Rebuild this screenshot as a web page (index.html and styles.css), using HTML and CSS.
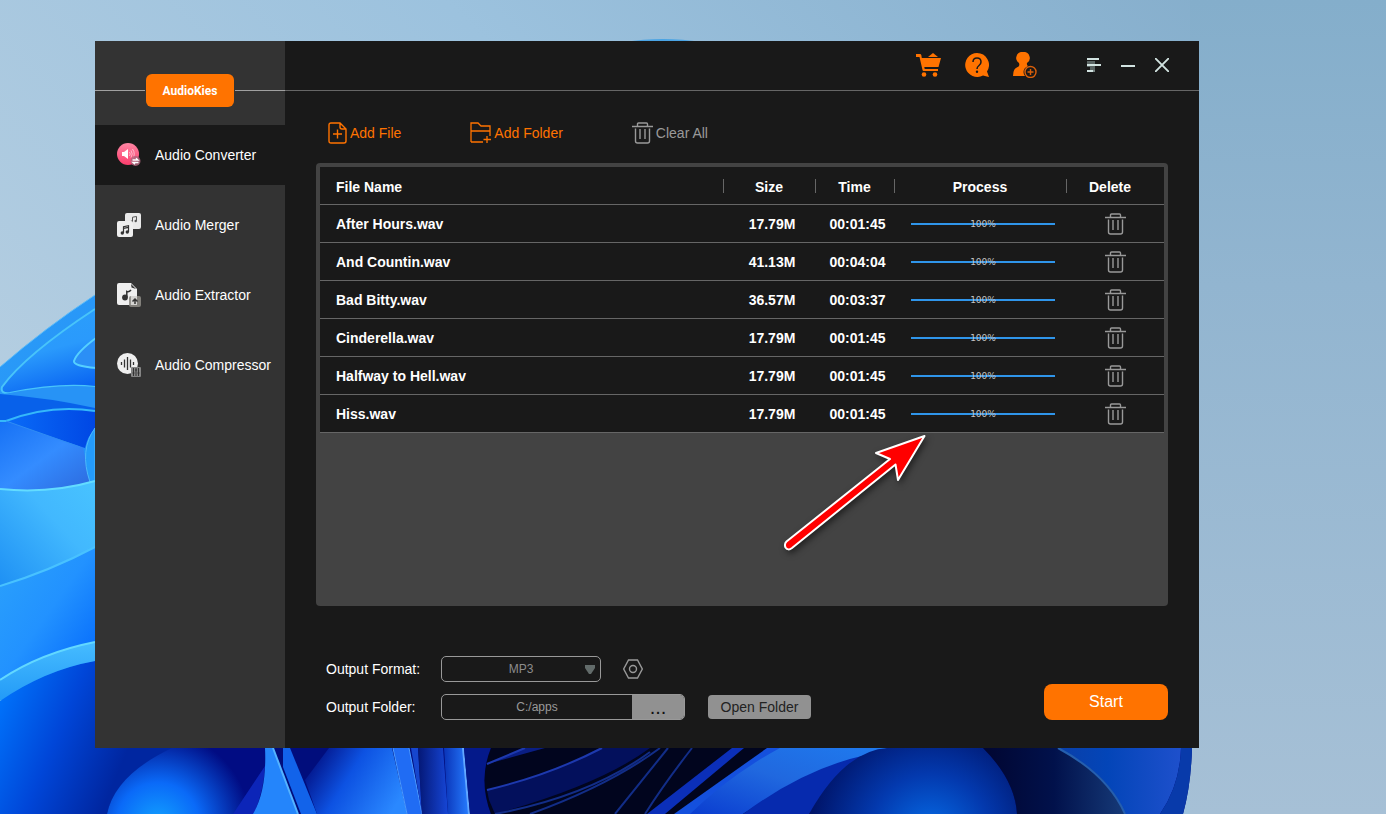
FILE: index.html
```html
<!DOCTYPE html>
<html lang="en">
<head>
    <meta charset="UTF-8">
    <meta name="viewport" content="width=device-width, initial-scale=1.0">
    <title>AudioKies</title>
    <link rel="stylesheet" href="styles.css">
</head>
<body>
    <!-- desktop wallpaper -->
    <svg class="wallpaper" viewBox="0 0 1386 814" preserveAspectRatio="none" aria-hidden="true">
        <defs>
            <linearGradient id="sky" x1="0" y1="0.6" x2="1" y2="0"><stop offset="0" stop-color="#b7cfe1"/><stop offset="0.5" stop-color="#9cc2de"/><stop offset="1" stop-color="#81aac8"/></linearGradient>
            <linearGradient id="skyRight" x1="0" y1="0" x2="0" y2="1"><stop offset="0" stop-color="#84aecb"/><stop offset="0.35" stop-color="#92b5d0"/><stop offset="1" stop-color="#a6c0d6"/></linearGradient>
            <linearGradient id="leaf" x1="0" y1="0" x2="0.3" y2="1"><stop offset="0" stop-color="#2c9df6"/><stop offset="0.6" stop-color="#2390fb"/><stop offset="1" stop-color="#0564f2"/></linearGradient>
            <linearGradient id="leafInner" x1="0.3" y1="0" x2="0.6" y2="1"><stop offset="0" stop-color="#2b9ffa"/><stop offset="0.5" stop-color="#2a9afc"/><stop offset="1" stop-color="#0a66f2"/></linearGradient>
            <linearGradient id="mid" x1="0" y1="0" x2="1" y2="1"><stop offset="0" stop-color="#1671f5"/><stop offset="0.5" stop-color="#348cff"/><stop offset="1" stop-color="#2c68dc"/></linearGradient>
            <linearGradient id="dark" x1="0" y1="0" x2="1" y2="0"><stop offset="0" stop-color="#0a6cf8"/><stop offset="1" stop-color="#0047e4"/></linearGradient>
            <linearGradient id="cyan" x1="0" y1="1" x2="1" y2="0"><stop offset="0" stop-color="#1e90f4"/><stop offset="0.6" stop-color="#42b8fe"/><stop offset="1" stop-color="#48c3ff"/></linearGradient>
            <linearGradient id="blue" x1="0" y1="0" x2="1" y2="1"><stop offset="0" stop-color="#2ba2fb"/><stop offset="0.5" stop-color="#2292ff"/><stop offset="1" stop-color="#0266fb"/></linearGradient>
            <linearGradient id="deep" gradientUnits="userSpaceOnUse" x1="0" y1="690" x2="130" y2="745"><stop offset="0" stop-color="#0074fc"/><stop offset="0.5" stop-color="#0046d8"/><stop offset="1" stop-color="#0026a0"/></linearGradient>
            <linearGradient id="band" x1="0" y1="0" x2="0" y2="1"><stop offset="0" stop-color="#46bcff"/><stop offset="1" stop-color="#239af7"/></linearGradient>
            <radialGradient id="glowLeft" gradientUnits="userSpaceOnUse" cx="158" cy="824" r="92"><stop offset="0" stop-color="#12a2ff"/><stop offset="0.45" stop-color="#0a6af8"/><stop offset="1" stop-color="#010c83"/></radialGradient>
            <radialGradient id="glowMid" gradientUnits="userSpaceOnUse" cx="930" cy="834" r="120"><stop offset="0" stop-color="#066de8"/><stop offset="0.5" stop-color="#0339ae"/><stop offset="1" stop-color="#001469"/></radialGradient>
            <linearGradient id="fold" x1="0" y1="0.2" x2="1" y2="0.6"><stop offset="0" stop-color="#010b7c"/><stop offset="0.45" stop-color="#0d52e2"/><stop offset="1" stop-color="#2a88ff"/></linearGradient>
            <linearGradient id="strip" x1="0" y1="0" x2="1" y2="0"><stop offset="0" stop-color="#0a34b8"/><stop offset="1" stop-color="#267cff"/></linearGradient>
            <linearGradient id="strip2" x1="0" y1="0" x2="1" y2="0"><stop offset="0" stop-color="#041775"/><stop offset="1" stop-color="#1646d6"/></linearGradient>
            <linearGradient id="ribbon" x1="0" y1="1" x2="1" y2="0"><stop offset="0" stop-color="#0a3dd0"/><stop offset="0.5" stop-color="#2068df"/><stop offset="1" stop-color="#1f7bef"/></linearGradient>
            <linearGradient id="shade" x1="0" y1="0" x2="1" y2="0"><stop offset="0" stop-color="#010631"/><stop offset="0.5" stop-color="#01114b"/><stop offset="1" stop-color="#163a78"/></linearGradient>
            <linearGradient id="edge" x1="0" y1="0" x2="1" y2="0"><stop offset="0" stop-color="#0a3fa8"/><stop offset="0.4" stop-color="#0345b8"/><stop offset="1" stop-color="#1e50cc"/></linearGradient>
        </defs>
        <rect width="1386" height="814" fill="url(#sky)"/>
        <path d="M1190 0H1386V814H1190Z" fill="url(#skyRight)"/>
        <ellipse cx="663" cy="79" rx="100" ry="40" fill="#4aa4e4"/>

        <!-- petals left of the window -->
        <path d="M0 367Q45 328 95 295H110V700H0Z" fill="url(#leaf)"/>
        <path d="M0 367Q45 328 95 295" fill="none" stroke="#5bbcf8"/>
        <path d="M95 309Q25 355 2 387Q0 394 10 393Q60 383 95 387Z" fill="url(#leafInner)"/>
        <path d="M95 309Q25 355 2 387Q0 394 10 393Q60 383 95 387" fill="none" stroke="#48c4fa" stroke-width="2"/>
        <path d="M96 338Q77 352 74 361Q73 366 96 368Z" fill="#2b8ff6" stroke="#55d0ff" stroke-width="2"/>
        <path d="M4 394Q60 383 95 387V408Q50 398 4 394Z" fill="#2793f6"/>
        <path d="M0 394Q50 398 95 408V411Q50 405 6 421H0Z" fill="#0861ea"/>
        <path d="M0 421H6L83 447L90 482L95 481Q50 493 0 489Z" fill="url(#mid)"/>
        <path d="M6 421Q50 404 95 411V429Q88 435 85 448Q45 435 6 421Z" fill="url(#dark)"/>
        <path d="M0 421H6Q50 404 95 411" fill="none" stroke="#35b8fa" stroke-width="2"/>
        <path d="M6 421L80 447" stroke="#2f8cf4"/>
        <path d="M95 428Q79 450 90 482H95Z" fill="#249bfb" stroke="#4cb9fa"/>
        <path d="M0 489Q50 494 95 481V547Q50 571 0 586Z" fill="url(#cyan)"/>
        <path d="M0 489Q50 494 95 481" fill="none" stroke="#63dcff" stroke-width="2"/>
        <path d="M0 586Q50 571 95 547V643Q40 653 0 680Z" fill="url(#blue)"/>
        <path d="M0 586Q50 571 95 547" fill="none" stroke="#48c2ff" stroke-width="2"/>

        <!-- petals below the window -->
        <path d="M160 740H1192V748Q1191 785 1183 814H90Z" fill="#010d7c"/>
        <path d="M0 701Q45 670 95 661L180 740V748Q115 775 107 814H0Z" fill="url(#deep)"/>
        <path d="M0 680Q40 653 95 642V661Q45 670 0 701Z" fill="url(#band)"/>
        <path d="M0 680Q40 653 95 642" fill="none" stroke="#62d8ff" stroke-width="2"/>
        <path d="M107 814Q115 775 172 748H265V770L234 814Z" fill="url(#glowLeft)"/>
        <path d="M265 766L233 814H254Q264 790 265 766Z" fill="#0c25b8"/>
        <path d="M265 748H273L298 814H253Q267 790 265 748Z" fill="#2485fb"/>
        <path d="M273 748L298 814" stroke="#54b3ff" stroke-width="2"/>
        <path d="M283 748H290L317 814H301L283 767Z" fill="#1263ea"/>
        <path d="M329 748H392L407 814H317L305 780Z" fill="url(#fold)"/>
        <path d="M393 748H409L422 814H407Z" fill="#206cf4"/>
        <path d="M393 748L407 814M409 748L422 814" stroke="#4d9cff"/>
        <path d="M411 748H418L422 814Z" fill="#1646ce"/>
        <path d="M418 748H443L448 814H422Z" fill="url(#strip2)"/>
        <path d="M444 748H463L469 814H448Z" fill="url(#strip)"/>
        <path d="M463 748L469 814" stroke="#62a8ff" stroke-width="2"/>
        <path d="M464 748H491Q478 780 491 814H470Z" fill="#04198a"/>
        <path d="M491 748Q478 780 491 814H760L820 748Z" fill="#01051e"/>
        <path d="M487 764L525 748H545Z" fill="#0a1e83"/>
        <path d="M487 790Q550 775 602 748H650Q600 785 495 814L489 800Z" fill="#03105c"/>
        <path d="M487 790Q550 775 602 748M487 764L525 748" fill="none" stroke="#1d39ae" stroke-width="2"/>
        <path d="M495 814Q590 796 650 752M530 814Q610 785 660 748M615 814L668 748M645 814Q664 784 692 748" fill="none" stroke="#122d87" stroke-width="2"/>
        <path d="M647 814L732 748H744L665 814Z" fill="#0b2fb9"/>
        <path d="M674 814L767 748H785L720 814Z" fill="#1450dd"/>
        <path d="M690 814Q730 775 780 748H888Q800 775 743 814Z" fill="url(#ribbon)"/>
        <path d="M743 814Q805 768 866 755L809 814Z" fill="#062aae"/>
        <path d="M809 814Q845 750 888 748H983Q1015 780 1017 814Z" fill="url(#glowMid)"/>
        <path d="M983 748H1060Q1110 780 1125 814H1017Q1015 780 983 748Z" fill="url(#shade)"/>
        <path d="M1058 748H1181Q1180 785 1160 814H1125Q1110 775 1058 748Z" fill="url(#edge)"/>
        <path d="M1058 748Q1108 775 1125 814" fill="none" stroke="#255fae" stroke-width="2"/>
        <path d="M1181 748H1192Q1191 785 1183 814H1160Q1180 785 1181 748Z" fill="#083aaa"/>
    </svg>

    <!-- shared bin icon -->
    <svg class="sprite" aria-hidden="true">
        <symbol id="icon-bin" viewBox="0 0 21 22">
            <path d="M0 4.5H21M5.500 4V2Q5.500 1 6.500 1H14.500Q15.500 1 15.500 2V4M3.500 6.500V19Q3.500 21 5.500 21H15.500Q17.500 21 17.500 19V6.500M8 7V17M13 7V17" fill="none" stroke="currentColor" stroke-width="1.400"/>
        </symbol>
    </svg>

    <div class="desktop">
        <div class="app">
            <aside class="sidebar">
                <div class="brand-row">
                    <button class="brand" type="button">AudioKies</button>
                </div>
                <nav class="nav">
                    <a class="nav-item active" href="#converter">
                        <svg width="24" height="24" viewBox="0 0 24 24">
                            <defs><linearGradient id="pink" x1="0" y1="0" x2="0" y2="1"><stop offset="0" stop-color="#ff86a4"/><stop offset="1" stop-color="#fb3d6c"/></linearGradient></defs>
                            <circle cx="11" cy="11" r="11" fill="url(#pink)"/>
                            <path d="M5 9H7L11 6V16L7 13H5Z" fill="#fff"/>
                            <path d="M12.500 9Q14 11 12.500 13M14 7.500Q16.500 11 14 14.500M15.500 6Q19 11 15.500 16" fill="none" stroke="#ffd3de" stroke-width="0.800"/>
                            <circle cx="18.500" cy="18" r="5" fill="#b0657d" opacity="0.850"/>
                            <path d="M15.500 17H21L19 15.200M21.500 19.500H16L18 21.200" fill="none" stroke="#fff" stroke-width="1.300"/>
                        </svg>
                        Audio Converter
                    </a>
                    <a class="nav-item" href="#merger">
                        <svg width="24" height="24" viewBox="0 0 24 24">
                            <rect x="8" width="16" height="16" rx="2" fill="#e9e9e9"/>
                            <path d="M15.500 8.500V4.200L19.500 3.500V7.800" fill="none" stroke="#555" stroke-width="1"/>
                            <circle cx="14.700" cy="8.700" r="1.200" fill="#555"/><circle cx="18.700" cy="8" r="1.200" fill="#555"/>
                            <rect y="8" width="16" height="16" rx="2" fill="#efefef"/>
                            <path d="M6.500 20V13.700L11.500 12.700V19M6.500 15.300L11.500 14.300" fill="none" stroke="#333" stroke-width="1.200"/>
                            <circle cx="5.300" cy="20" r="1.700" fill="#333"/><circle cx="10.300" cy="19" r="1.700" fill="#333"/>
                        </svg>
                        Audio Merger
                    </a>
                    <a class="nav-item" href="#extractor">
                        <svg width="24" height="24" viewBox="0 0 24 24">
                            <path d="M2 0H14L20 6V22H2Q0 22 0 20V2Q0 0 2 0Z" fill="#efefef"/>
                            <path d="M14 1L19 6L14.500 4.500Z" fill="#333"/>
                            <path d="M9.800 14V8.500Q12 9.500 14 7" fill="none" stroke="#333" stroke-width="1.500"/>
                            <circle cx="8" cy="14.500" r="2.900" fill="#333"/>
                            <rect x="12" y="13" width="12" height="11" rx="2" fill="#8b8883" opacity="0.900"/>
                            <path d="M14 13H20V22H14Z" fill="#d5d4d2"/>
                            <path d="M18 21V17M15.500 18.500L18 16L20.500 18.500" fill="none" stroke="#333" stroke-width="1.500"/>
                        </svg>
                        Audio Extractor
                    </a>
                    <a class="nav-item" href="#compressor">
                        <svg width="24" height="24" viewBox="0 0 24 24">
                            <circle cx="10.500" cy="10.500" r="10.500" fill="#efefef"/>
                            <path d="M4.500 9V12M7.500 6.500V14.500M10.500 4V17M13.500 6.500V14.500M16.500 9V12" stroke="#333" stroke-width="1.300"/>
                            <rect x="14" y="14" width="10" height="10" rx="1" fill="#858585"/>
                            <path d="M16.500 15V23M19 15V23M21.500 15V23M15.500 20H17.500M18 17H20M20.500 20H22.500" stroke="#333" stroke-width="1"/>
                        </svg>
                        Audio Compressor
                    </a>
                </nav>
            </aside>

            <main class="main">
                <header class="titlebar">
                    <div class="actions">
                        <button class="icon-btn orange" type="button" aria-label="Buy">
                            <svg width="25" height="26" viewBox="0 0 25 26">
                                <path d="M0 2H4Q5 2 5.300 3L5.800 6H25L22.500 15H8.300L8.700 17H22V19H7.500Q6.700 19 6.500 18L3.500 5H0Z" fill="currentColor"/>
                                <path d="M12 5L17 1L22 5Z" fill="currentColor"/>
                                <circle cx="8" cy="22.500" r="2.300" fill="currentColor"/><circle cx="19" cy="22.500" r="2.300" fill="currentColor"/>
                            </svg>
                        </button>
                        <button class="icon-btn orange" type="button" aria-label="Help">
                            <svg width="24" height="26" viewBox="0 0 24 26">
                                <path d="M12 1A12 12 0 1 0 18 23.500L24 25L22 19.500A12 12 0 0 0 12 1Z" fill="currentColor"/>
                                <path d="M8 10Q8 6 12 6T16 10Q16 12 14 13.500T12 17" fill="none" stroke="#191919" stroke-width="1.500"/>
                                <circle cx="12" cy="19.700" r="1.200" fill="#191919"/>
                            </svg>
                        </button>
                        <button class="icon-btn orange" type="button" aria-label="Register">
                            <svg width="24" height="26" viewBox="0 0 24 26">
                                <path d="M10 0A6 6 0 0 1 14 11Q13.500 13 15 14Q10.500 16 10.500 20Q10.500 22.500 12 24H0Q0 16 5 15Q7 14 6 11A6 6 0 0 1 10 0Z" fill="currentColor"/>
                                <g fill="none" stroke="#d95f0a" stroke-width="1.400"><circle cx="17.500" cy="20" r="5.500"/><path d="M14.500 20H20.500M17.500 17V23"/></g>
                            </svg>
                        </button>
                    </div>
                    <div class="window-controls">
                        <button class="icon-btn" type="button" aria-label="Menu">
                            <svg width="14" height="14" viewBox="0 0 14 14">
                                <path d="M0 3H8V12H3V9H0Z" fill="#596362"/>
                                <path d="M0 1H12M0 7H14M0 13H6" stroke="currentColor" stroke-width="2"/>
                                <path d="M6 13H8" stroke="#788583" stroke-width="2"/>
                            </svg>
                        </button>
                        <button class="icon-btn" type="button" aria-label="Minimize">
                            <svg width="14" height="14" viewBox="0 0 14 14"><path d="M0 8H14" stroke="currentColor" stroke-width="2"/></svg>
                        </button>
                        <button class="icon-btn" type="button" aria-label="Close">
                            <svg width="14" height="14" viewBox="0 0 14 14"><path d="M0 0L14 14M14 0L0 14" stroke="currentColor" stroke-width="1.900"/></svg>
                        </button>
                    </div>
                </header>

                <div class="toolbar">
                    <button class="tool orange" type="button">
                        <svg width="19" height="22" viewBox="0 0 19 22">
                            <path d="M3 1H12L18 7V19Q18 21 16 21H3Q1 21 1 19V3Q1 1 3 1ZM12 1V5Q12 7 14 7H18M5 12H14M9.500 7.500V16.500" fill="none" stroke="currentColor" stroke-width="1.400"/>
                        </svg>
                        Add File
                    </button>
                    <button class="tool orange" type="button">
                        <svg width="21" height="22" viewBox="0 0 21 22">
                            <path d="M1 20V1H8L11 4H20V14M1 9H20M1 20H13M13.500 17.500H21M17 14V21" fill="none" stroke="currentColor" stroke-width="1.300"/>
                        </svg>
                        Add Folder
                    </button>
                    <button class="tool" type="button">
                        <svg width="21" height="22"><use href="#icon-bin"/></svg>
                        Clear All
                    </button>
                </div>

                <section class="panel">
                    <table class="files">
                        <thead>
                            <tr>
                                <th class="col-name">File Name</th>
                                <th class="col-size">Size</th>
                                <th class="col-time">Time</th>
                                <th class="col-process">Process</th>
                                <th class="col-delete">Delete</th>
                            </tr>
                        </thead>
                        <tbody>
                            <tr>
                                <td>After Hours.wav</td><td>17.79M</td><td>00:01:45</td>
                                <td><div class="progress"><span>100%</span></div></td>
                                <td><button class="delete" type="button" aria-label="Delete After Hours.wav"><svg width="21" height="22"><use href="#icon-bin"/></svg></button></td>
                            </tr>
                            <tr>
                                <td>And Countin.wav</td><td>41.13M</td><td>00:04:04</td>
                                <td><div class="progress"><span>100%</span></div></td>
                                <td><button class="delete" type="button" aria-label="Delete And Countin.wav"><svg width="21" height="22"><use href="#icon-bin"/></svg></button></td>
                            </tr>
                            <tr>
                                <td>Bad Bitty.wav</td><td>36.57M</td><td>00:03:37</td>
                                <td><div class="progress"><span>100%</span></div></td>
                                <td><button class="delete" type="button" aria-label="Delete Bad Bitty.wav"><svg width="21" height="22"><use href="#icon-bin"/></svg></button></td>
                            </tr>
                            <tr>
                                <td>Cinderella.wav</td><td>17.79M</td><td>00:01:45</td>
                                <td><div class="progress"><span>100%</span></div></td>
                                <td><button class="delete" type="button" aria-label="Delete Cinderella.wav"><svg width="21" height="22"><use href="#icon-bin"/></svg></button></td>
                            </tr>
                            <tr>
                                <td>Halfway to Hell.wav</td><td>17.79M</td><td>00:01:45</td>
                                <td><div class="progress"><span>100%</span></div></td>
                                <td><button class="delete" type="button" aria-label="Delete Halfway to Hell.wav"><svg width="21" height="22"><use href="#icon-bin"/></svg></button></td>
                            </tr>
                            <tr>
                                <td>Hiss.wav</td><td>17.79M</td><td>00:01:45</td>
                                <td><div class="progress"><span>100%</span></div></td>
                                <td><button class="delete" type="button" aria-label="Delete Hiss.wav"><svg width="21" height="22"><use href="#icon-bin"/></svg></button></td>
                            </tr>
                        </tbody>
                    </table>
                    <svg class="arrow" width="160" height="130" viewBox="775 425 160 130" aria-hidden="true">
                        <path d="M786.500 541.500L890 459L876 453L924.500 436L898 480L895.500 464.500L792 548Q788 551 785.500 547.500Q784 544 786.500 541.500Z" fill="#f00" stroke="#fff" stroke-width="2" stroke-linejoin="round"/>
                    </svg>
                </section>

                <footer class="output">
                    <div class="fields">
                        <div class="field">
                            <label for="format">Output Format:</label>
                            <div class="select-wrap">
                                <select id="format">
                                    <option>MP3</option>
                                </select>
                                <svg class="caret" width="10" height="9" viewBox="0 0 10 9"><path d="M0 0H10V3L6 9H4L0 3Z" fill="#626b6a"/></svg>
                            </div>
                            <button class="icon-btn settings" type="button" aria-label="Format settings">
                                <svg width="20" height="20" viewBox="0 0 20 20"><path d="M5.500 1H14.500L19.300 10L14.500 19H5.500L0.700 10Z" fill="none" stroke="currentColor" stroke-width="1.400"/><circle cx="10" cy="10" r="3.500" fill="none" stroke="currentColor" stroke-width="1.400"/></svg>
                            </button>
                        </div>
                        <div class="field">
                            <label for="folder">Output Folder:</label>
                            <div class="path">
                                <input id="folder" type="text" value="C:/apps">
                                <button type="button" aria-label="Browse">...</button>
                            </div>
                            <button class="open" type="button">Open Folder</button>
                        </div>
                    </div>
                    <button class="start" type="button">Start</button>
                </footer>
            </main>
        </div>
    </div>
</body>
</html>
```

FILE: styles.css
```css
* {
    margin: 0;
    padding: 0;
    box-sizing: border-box;
}

body {
    position: relative;
    background-color: #a6c0d6;
    color: #fff;
    font-family: "Liberation Sans", Arial, sans-serif;
    font-size: 14px;
}

button,
input,
select {
    font: inherit;
    color: inherit;
    border: none;
    background: none;
}

button {
    cursor: pointer;
}

svg {
    display: block;
    flex-shrink: 0;
}

.wallpaper {
    position: absolute;
    inset: 0;
    width: 100%;
    height: 100%;
}

.sprite {
    position: absolute;
    width: 0;
    height: 0;
}

.desktop {
    position: relative;
    display: flex;
    min-height: 100vh;
    padding: 41px 187px 66px 95px;
}

.app {
    flex: 1;
    display: flex;
    min-width: 0;
    background-color: #191919;
}

/* sidebar */
.sidebar {
    flex: 0 0 190px;
    background-color: #333;
}

.brand-row {
    display: flex;
    align-items: center;
    gap: 1px;
    height: 84px;
    padding-top: 15px;
}

.brand-row::before,
.brand-row::after {
    content: '';
    flex: 1;
    height: 1px;
    background-color: #a0a0a0;
}

.brand {
    width: 88px;
    height: 33px;
    border-radius: 6px;
    background-color: #ff7300;
    font-family: Roboto, sans-serif;
    font-size: 12px;
    font-weight: bold;
}

.nav {
    display: flex;
    flex-direction: column;
    gap: 10px;
}

.nav-item {
    display: flex;
    align-items: center;
    gap: 14px;
    height: 60px;
    padding-left: 22px;
    color: #fff;
    text-decoration: none;
    white-space: nowrap;
}

.nav-item.active {
    background-color: #191919;
}

/* main column */
.main {
    flex: 1;
    display: flex;
    flex-direction: column;
    min-width: 0;
}

.titlebar {
    display: flex;
    justify-content: flex-end;
    align-items: center;
    gap: 50px;
    height: 50px;
    padding: 0 30px 2px 0;
    border-bottom: 1px solid #666;
}

.actions {
    display: flex;
    gap: 24px;
}

.window-controls {
    display: flex;
    gap: 20px;
    color: #d2e3e1;
}

.orange {
    color: #ff7300;
}

.toolbar {
    display: flex;
    align-items: center;
    gap: 69px;
    height: 72px;
    padding: 12px 43px 0;
}

.tool {
    display: flex;
    align-items: center;
    gap: 3px;
    color: #999;
    line-height: 20px;
}

.tool.orange {
    color: #ff7300;
}

/* file list */
.panel {
    position: relative;
    flex: 1;
    margin: 0 31px;
    padding: 4px;
    border-radius: 4px;
    background-color: #434343;
}

.files {
    width: 100%;
    table-layout: fixed;
    border-collapse: separate;
    border-spacing: 0;
    background-color: #191919;
    font-weight: bold;
}

.files th,
.files td {
    height: 38px;
    border-bottom: 1px solid #666;
    text-align: center;
}

.files th {
    padding-top: 2px;
}

.files td + td {
    padding-left: 6px;
}

.files th + th {
    background: linear-gradient(#666, #666) left center / 1px 14px no-repeat;
}

.files th:first-child,
.files td:first-child {
    padding-left: 16px;
    text-align: left;
}

.files td:last-child {
    padding-left: 0;
}

.col-size {
    width: 92px;
}

.col-time {
    width: 79px;
}

.col-process {
    width: 172px;
}

.col-delete {
    width: 98px;
    padding-right: 10px;
}

.progress {
    display: flex;
    justify-content: center;
    align-items: center;
    width: 144px;
    height: 14px;
    margin: 0 auto;
    background: linear-gradient(#2f95ea, #2f95ea) center / 100% 2px no-repeat;
    color: #c4c4c4;
    font-family: "DejaVu Sans", sans-serif;
    font-size: 9px;
    font-weight: normal;
}

.delete {
    display: block;
    margin: 0 auto;
    color: #999;
}

.arrow {
    position: absolute;
    top: 262px;
    right: 233px;
    filter: drop-shadow(2px 3px 3px rgba(0, 0, 0, 0.5));
    pointer-events: none;
}

/* output settings */
.output {
    display: flex;
    justify-content: space-between;
    align-items: flex-end;
    padding: 50px 31px 28px 41px;
}

.fields {
    display: flex;
    flex-direction: column;
    gap: 12px;
}

.field {
    display: flex;
    align-items: center;
    height: 26px;
}

.field label {
    width: 115px;
}

.select-wrap {
    position: relative;
}

.select-wrap select {
    display: block;
    width: 160px;
    height: 26px;
    border: 1px solid #999;
    border-radius: 5px;
    appearance: none;
    color: #8c8c8c;
    font-size: 12px;
    text-align: center;
    text-align-last: center;
}

.caret {
    position: absolute;
    top: 9px;
    right: 6px;
    pointer-events: none;
}

.settings {
    margin-left: 22px;
    color: #999;
}

.path {
    display: flex;
    width: 244px;
    height: 26px;
    border: 1px solid #999;
    border-radius: 5px;
    overflow: hidden;
}

.path input {
    flex: 1;
    min-width: 0;
    color: #999;
    font-size: 12px;
    text-align: center;
}

.path button {
    width: 52px;
    background-color: #919191;
    color: #111;
    font-size: 20px;
    line-height: 16px;
}

.open {
    width: 103px;
    height: 24px;
    margin-left: 23px;
    border-radius: 4px;
    background-color: #919191;
    color: #222;
}

.start {
    width: 124px;
    height: 36px;
    border-radius: 8px;
    background-color: #ff7300;
    font-size: 16px;
}
```
